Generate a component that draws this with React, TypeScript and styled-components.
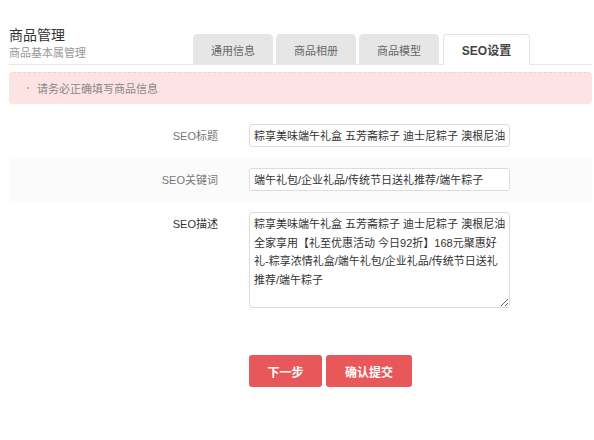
import React from "react";
import styled, { createGlobalStyle } from "styled-components";

const Global = createGlobalStyle`
  html, body { margin: 0; padding: 0; background: #fff; }
  body {
    font-family: "Liberation Sans", "Noto Sans CJK SC", sans-serif;
    font-size: 11px;
    color: #333;
  }
`;

const Page = styled.div`
  padding: 0 2px 0 9px;
  width: 594px;
  box-sizing: border-box;
`;

const Header = styled.div`
  display: flex;
  align-items: flex-end;
  height: 64px;
  border-bottom: 1px solid #e6e6e6;
  box-sizing: content-box;
`;

const TitleBlock = styled.div`
  width: 184px;
  align-self: flex-start;
  padding-top: 25px;
`;

const Title = styled.div`
  font-size: 14px;
  line-height: 20px;
  color: #333;
`;

const Subtitle = styled.div`
  font-size: 11px;
  line-height: 16px;
  color: #999;
`;

const Tabs = styled.div`
  display: flex;
  gap: 3px;
  margin-bottom: -1px;
`;

const Tab = styled.div<{ $active?: boolean }>`
  width: ${(p) => (p.$active ? "87px" : "80px")};
  height: 31px;
  box-sizing: border-box;
  display: flex;
  align-items: center;
  justify-content: center;
  border-radius: 4px 4px 0 0;
  background: ${(p) => (p.$active ? "#fff" : "#e6e6e6")};
  border: 1px solid ${(p) => (p.$active ? "#e2e2e2" : "#e6e6e6")};
  border-bottom: ${(p) => (p.$active ? "1px solid #fff" : "1px solid #e6e6e6")};
  color: ${(p) => (p.$active ? "#444" : "#666")};
  font-size: ${(p) => (p.$active ? "12px" : "11px")};
  font-weight: ${(p) => (p.$active ? "bold" : "normal")};
  margin-left: ${(p) => (p.$active ? "1px" : "0")};
`;

const Alert = styled.div`
  margin-top: 7px;
  height: 32px;
  box-sizing: border-box;
  background: #fee3e5;
  border: 1px solid #fee3e5;
  border-top: 1px dashed #fcccd0;
  border-radius: 4px;
  display: flex;
  align-items: center;
  padding-left: 17px;
  color: #888;
  font-size: 11px;
`;

const Dot = styled.span`
  width: 2px;
  height: 2px;
  background: #f08890;
  border-radius: 50%;
  margin-right: 8px;
`;

const Form = styled.div`
  margin-top: 9px;
`;

const Row = styled.div<{ $shade?: boolean; $top?: boolean }>`
  display: flex;
  align-items: ${(p) => (p.$top ? "flex-start" : "center")};
  padding: ${(p) => (p.$top ? "11px 0" : "0")};
  height: ${(p) => (p.$top ? "auto" : "44px")};
  background: ${(p) => (p.$shade ? "#fbfbfb" : "transparent")};
`;

const Label = styled.div<{ $dark?: boolean; $top?: boolean }>`
  width: 209px;
  text-align: right;
  padding-right: 31px;
  color: ${(p) => (p.$dark ? "#333" : "#777")};
  font-size: 11px;
  padding-top: ${(p) => (p.$top ? "3px" : "0")};
`;

const Input = styled.input`
  width: 261px;
  height: 23px;
  box-sizing: border-box;
  border: 1px solid #dcdcdc;
  border-radius: 3px;
  padding: 0 4px;
  font-family: inherit;
  font-size: 11px;
  color: #333;
  outline: none;
  background: #fff;
`;

const TextArea = styled.textarea`
  width: 261px;
  height: 96px;
  box-sizing: border-box;
  border: 1px solid #dcdcdc;
  border-radius: 3px;
  padding: 2px 2px 2px 4px;
  font-family: inherit;
  font-size: 11px;
  line-height: 18.5px;
  color: #333;
  outline: none;
  resize: both;
  background: #fff;
`;

const Actions = styled.div`
  display: flex;
  gap: 4px;
  padding-left: 240px;
  margin-top: 36px;
`;

const Button = styled.button<{ $w: number }>`
  width: ${(p) => p.$w}px;
  height: 32px;
  border: none;
  border-radius: 3px;
  background: #e8585b;
  color: #fff;
  font-family: inherit;
  font-size: 12px;
  font-weight: bold;
  cursor: pointer;
`;

export default function App() {
  return (
    <>
      <Global />
      <Page>
        <Header>
          <TitleBlock>
            <Title>商品管理</Title>
            <Subtitle>商品基本属管理</Subtitle>
          </TitleBlock>
          <Tabs>
            <Tab>通用信息</Tab>
            <Tab>商品相册</Tab>
            <Tab>商品模型</Tab>
            <Tab $active>SEO设置</Tab>
          </Tabs>
        </Header>
        <Alert>
          <Dot />
          请务必正确填写商品信息
        </Alert>
        <Form>
          <Row>
            <Label>SEO标题</Label>
            <Input defaultValue="粽享美味端午礼盒 五芳斋粽子 迪士尼粽子 澳根尼油 全家享用" />
          </Row>
          <Row $shade>
            <Label>SEO关键词</Label>
            <Input defaultValue="端午礼包/企业礼品/传统节日送礼推荐/端午粽子" />
          </Row>
          <Row $top>
            <Label $dark $top>SEO描述</Label>
            <TextArea defaultValue="粽享美味端午礼盒 五芳斋粽子 迪士尼粽子 澳根尼油 全家享用【礼至优惠活动 今日92折】168元聚惠好礼-粽享浓情礼盒/端午礼包/企业礼品/传统节日送礼推荐/端午粽子" />
          </Row>
        </Form>
        <Actions>
          <Button $w={73}>下一步</Button>
          <Button $w={86}>确认提交</Button>
        </Actions>
      </Page>
    </>
  );
}
